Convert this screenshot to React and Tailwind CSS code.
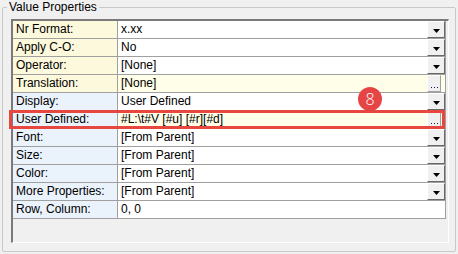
const rows = [
  { label: 'Nr Format:', value: 'x.xx', labelBg: 'bg-[#fdf9dc]', valueBg: 'bg-white', btn: 'drop' },
  { label: 'Apply C-O:', value: 'No', labelBg: 'bg-[#fdf9dc]', valueBg: 'bg-white', btn: 'drop' },
  { label: 'Operator:', value: '[None]', labelBg: 'bg-[#fdf9dc]', valueBg: 'bg-white', btn: 'drop' },
  { label: 'Translation:', value: '[None]', labelBg: 'bg-[#fdf9dc]', valueBg: 'bg-[#fffee8]', btn: 'dots' },
  { label: 'Display:', value: 'User Defined', labelBg: 'bg-[#eaf2fc]', valueBg: 'bg-white', btn: 'drop' },
  { label: 'User Defined:', value: '#L:\\t#V [#u] [#r][#d]', labelBg: 'bg-[#eaf2fc]', valueBg: 'bg-[#fffee8]', btn: 'dots' },
  { label: 'Font:', value: '[From Parent]', labelBg: 'bg-[#eaf2fc]', valueBg: 'bg-white', btn: 'drop' },
  { label: 'Size:', value: '[From Parent]', labelBg: 'bg-[#eaf2fc]', valueBg: 'bg-white', btn: 'drop' },
  { label: 'Color:', value: '[From Parent]', labelBg: 'bg-[#eaf2fc]', valueBg: 'bg-white', btn: 'drop' },
  { label: 'More Properties:', value: '[From Parent]', labelBg: 'bg-[#eaf2fc]', valueBg: 'bg-white', btn: 'drop' },
  { label: 'Row, Column:', value: '0, 0', labelBg: 'bg-[#eaf2fc]', valueBg: 'bg-white', btn: null },
];

const DropButton = () => (
  <div className="w-[18px] h-full bg-[#f0f0f0] border-t border-l border-t-white border-l-white border-r border-b border-r-[#696969] border-b-[#696969] flex items-center justify-center">
    <svg width="7" height="4" viewBox="0 0 7 4" className="mt-[2px]">
      <path d="M0 0 H7 L3.5 4 Z" fill="#000" />
    </svg>
  </div>
);

const DotsButton = () => (
  <div className="w-[14px] h-full mr-[4px] bg-[#f0f0f0] border-t border-l border-t-white border-l-white border-r border-b border-r-[#a0a0a0] border-b-[#a0a0a0] flex items-end justify-center pb-[2px]">
    <svg width="7" height="2" viewBox="0 0 7 2">
      <rect x="0" y="0" width="1" height="1" fill="#1a1a5a" />
      <rect x="3" y="0" width="1" height="1" fill="#1a1a5a" />
      <rect x="6" y="0" width="1" height="1" fill="#1a1a5a" />
    </svg>
  </div>
);

const App = () => {
  return (
    <div className="relative w-[458px] h-[254px] bg-[#f0f0f0] pl-[2px] text-[12px] text-black font-['Liberation_Sans',Arial,sans-serif] overflow-hidden">
      <fieldset className="w-[454px] h-[252px] border border-[#c8c8c8] rounded-[2px] pl-[8px] pb-0">
        <legend className="-ml-[4px] px-[2px] leading-[15px]">Value Properties</legend>

        <div className="mt-[4px] w-[438px] h-[224px] border-t-2 border-l-2 border-t-[#7a7a7a] border-l-[#7a7a7a] border-r border-b border-r-white border-b-white">
          <div className="w-[433px]">
            {rows.map((row) => (
              <div key={row.label} className="flex h-[18px] border-b border-[#a0a0a0]">
                <div className={`w-[105px] shrink-0 border-r border-[#a0a0a0] pl-[3px] leading-[17px] ${row.labelBg}`}>
                  {row.label}
                </div>
                <div className={`flex-1 flex border-r border-[#a0a0a0] ${row.valueBg}`}>
                  <div className="flex-1 pl-[3px] leading-[17px] whitespace-pre">{row.value}</div>
                  {row.btn === 'drop' && <DropButton />}
                  {row.btn === 'dots' && <DotsButton />}
                </div>
              </div>
            ))}
          </div>
        </div>
      </fieldset>

      {/* highlight around the User Defined row */}
      <div className="absolute left-[9px] top-[110px] w-[436px] h-[19px] border-[3px] border-[#e8473f] pointer-events-none" />

      {/* step badge */}
      <div className="absolute left-[358px] top-[87px] w-[24px] h-[24px] rounded-full bg-[#e64545] text-white text-[16px] leading-[24px] text-center font-light font-['Open_Sans',sans-serif]">
        8
      </div>
    </div>
  );
};

export default App;
